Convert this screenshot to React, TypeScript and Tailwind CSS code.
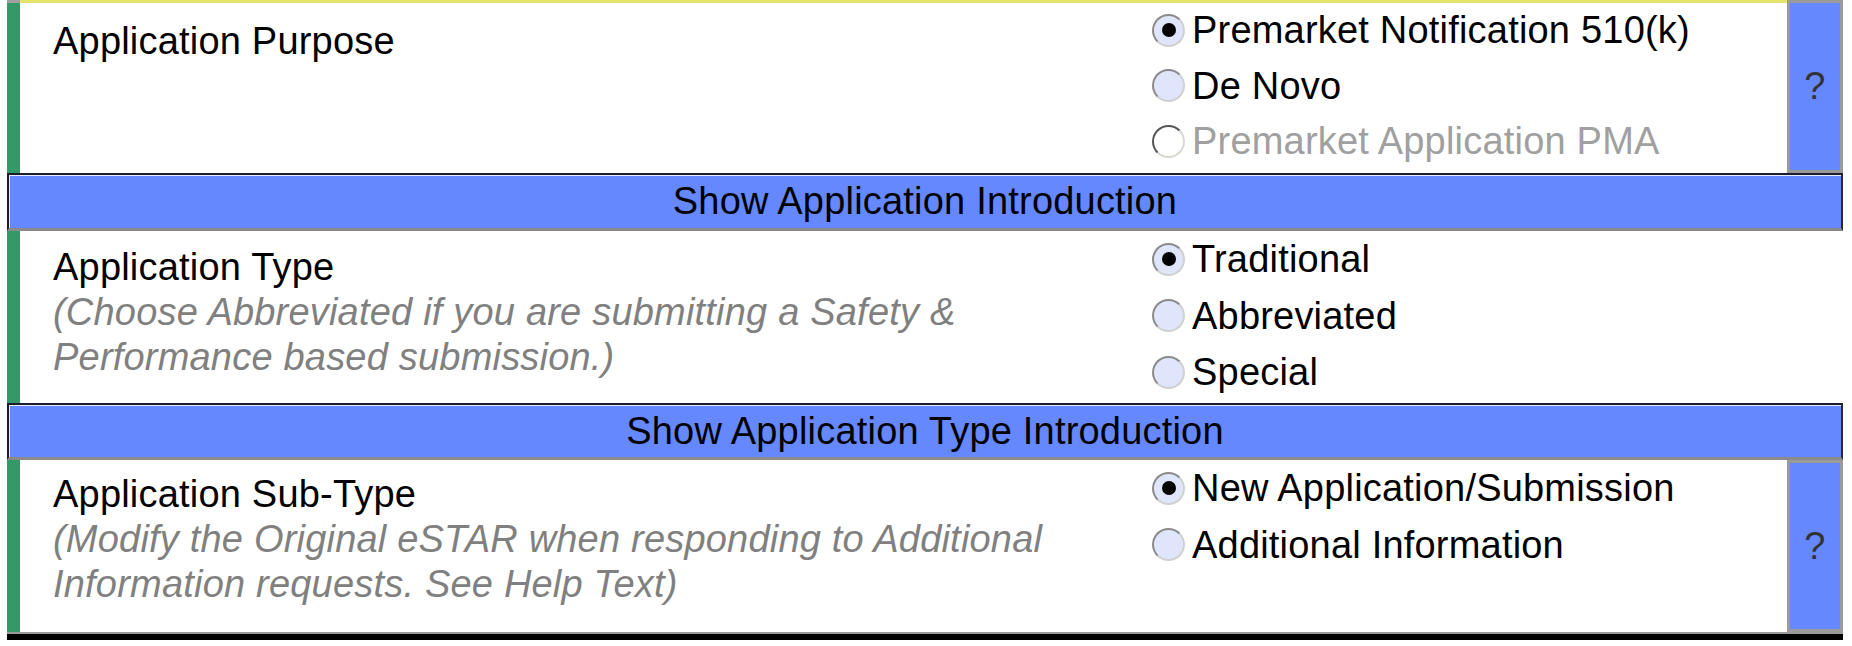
import React from "react";

type Opt = { label: string; checked?: boolean; disabled?: boolean };

type Section = {
  title: string;
  hint?: string;
  options: Opt[];
  help?: boolean;
  topBorder?: boolean;
  padTop: string;
  height: string;
};

const Radio = ({ checked, disabled }: { checked?: boolean; disabled?: boolean }) => {
  if (disabled) {
    return (
      <span className="w-[33px] h-[33px] shrink-0 rounded-full bg-white border-2 border-t-[#555] border-l-[#555] border-r-[#d8d8d0] border-b-[#d8d8d0]"></span>
    );
  }
  return (
    <span className="w-[33px] h-[33px] shrink-0 rounded-full bg-[#dfe5fb] border-2 border-t-[#8a8a8a] border-l-[#8a8a8a] border-r-[#d0d0d0] border-b-[#d0d0d0] flex items-center justify-center">
      {checked && <span className="w-[14px] h-[14px] rounded-full bg-black"></span>}
    </span>
  );
};

const Row = ({ s }: { s: Section }) => {
  return (
    <div className={`flex ${s.height}`}>
      {/* green marker */}
      <div
        className={`w-[13px] shrink-0 bg-[#339966] ${s.topBorder ? "border-t-[3px] border-[#a0a0a0]" : ""}`}
      ></div>

      {/* label + hint */}
      <div
        className={`w-[1132px] shrink-0 pl-[33px] bg-white ${s.padTop} ${s.topBorder ? "border-t-[3px] border-[#e4e46a]" : ""}`}
      >
        <div className="text-[38px] leading-[45px] text-black">{s.title}</div>
        {s.hint && (
          <div className="text-[38px] leading-[45px] italic text-[#808080]">{s.hint}</div>
        )}
      </div>

      {/* options */}
      <div
        className={`flex-1 bg-white flex flex-col ${s.topBorder ? "border-t-[3px] border-[#e4e46a]" : ""}`}
      >
        {s.options.map((o, i) => (
          <div key={i} className={`flex items-center gap-[7px] h-[56.5px] ${s.topBorder ? "-mt-px" : ""}`}>
            <Radio checked={o.checked} disabled={o.disabled} />
            <span
              className={`text-[38px] leading-none whitespace-nowrap ${o.disabled ? "text-[#a0a0a0]" : "text-black"}`}
            >
              {o.label}
            </span>
          </div>
        ))}
      </div>

      {/* help */}
      {s.help && (
        <div className="w-[56px] shrink-0 bg-[#6688ff] border-[3px] border-[#9a9a9a] flex items-center justify-center text-[38px] text-[#333333]">
          ?
        </div>
      )}
    </div>
  );
};

const ShowButton = ({ label, height }: { label: string; height: string }) => (
  <div
    className={`${height} flex items-center justify-center bg-[#6688ff] border-t-2 border-l-2 border-r-2 border-t-[#1c1c2e] border-l-[#1c1c2e] border-r-[#2a2a2a] border-b-[3px] border-b-[#8a8a8a] shadow-[inset_1px_1px_0_#e8ecff] text-[38px] text-black`}
  >
    {label}
  </div>
);

const sections: Section[] = [
  {
    title: "Application Purpose",
    options: [
      { label: "Premarket Notification 510(k)", checked: true },
      { label: "De Novo" },
      { label: "Premarket Application PMA", disabled: true },
    ],
    help: true,
    topBorder: true,
    padTop: "pt-[16px]",
    height: "h-[173px]",
  },
  {
    title: "Application Type",
    hint: "(Choose Abbreviated if you are submitting a Safety & Performance based submission.)",
    options: [
      { label: "Traditional", checked: true },
      { label: "Abbreviated" },
      { label: "Special" },
    ],
    padTop: "pt-[14px]",
    height: "h-[172px]",
  },
  {
    title: "Application Sub-Type",
    hint: "(Modify the Original eSTAR when responding to Additional Information requests. See Help Text)",
    options: [
      { label: "New Application/Submission", checked: true },
      { label: "Additional Information" },
    ],
    help: true,
    padTop: "pt-[12px]",
    height: "h-[172px]",
  },
];

export default function App() {
  return (
    <div
      className="w-[1852px] h-[646px] bg-white overflow-hidden tracking-[0.2px]"
      style={{ fontFamily: '"Liberation Sans", Arial, sans-serif' }}
    >
      <div className="ml-[7px] w-[1836px] flex flex-col">
        <Row s={sections[0]} />
        <ShowButton label="Show Application Introduction" height="h-[58px]" />
        <Row s={sections[1]} />
        <ShowButton label="Show Application Type Introduction" height="h-[57px]" />
        <div className="border-b-2 border-[#9a9a9a]">
          <Row s={sections[2]} />
        </div>
        <div className="h-[6px] bg-black"></div>
      </div>
    </div>
  );
}
